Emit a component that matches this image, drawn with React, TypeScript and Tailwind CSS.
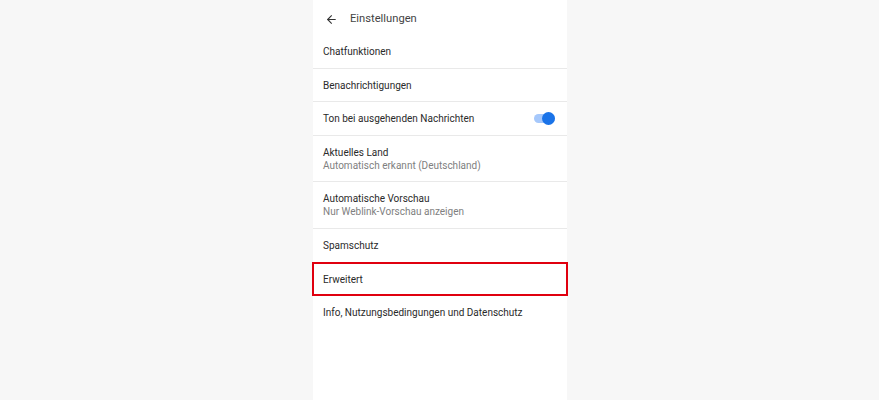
import { ArrowLeft } from "lucide-react";

type Item = {
  id: number;
  title: string;
  subtitle?: string;
  toggle?: boolean;
  marked?: boolean;
  divider?: boolean;
};

const items: Item[] = [
  { id: 1, title: "Chatfunktionen", divider: true },
  { id: 2, title: "Benachrichtigungen", divider: true },
  { id: 3, title: "Ton bei ausgehenden Nachrichten", toggle: true, divider: true },
  { id: 4, title: "Aktuelles Land", subtitle: "Automatisch erkannt (Deutschland)", divider: true },
  { id: 5, title: "Automatische Vorschau", subtitle: "Nur Weblink-Vorschau anzeigen", divider: true },
  { id: 6, title: "Spamschutz" },
  { id: 7, title: "Erweitert", marked: true },
  { id: 8, title: "Info, Nutzungsbedingungen und Datenschutz" },
];

const App = () => {
  return (
    <div className="w-full h-[400px] bg-[#f7f7f7] flex justify-center font-['Roboto',sans-serif] overflow-hidden">
      <section className="w-[254px] h-full bg-white ml-[1px]">
        <header className="h-[35px] flex items-center pl-[12px] pt-[3px]">
          <ArrowLeft className="w-[13px] h-[13px] text-[#333]" strokeWidth={2} />
          <h1 className="ml-[12px] text-[11.2px] text-[#444]">Einstellungen</h1>
        </header>
        <ul>
          {items.map((item) => {
            const { id, title, subtitle, toggle, marked, divider } = item;
            return (
              <li
                key={id}
                className={`relative flex items-center pl-[10px] pr-[12px] pt-px ${
                  subtitle ? "h-[46.5px]" : "h-[33.5px]"
                } ${divider ? "border-b border-[#e9e9e9]" : ""}`}
              >
                <div className="flex-1 flex flex-col justify-center">
                  <p className="text-[10px] leading-[13px] text-[#2a2a2a]">{title}</p>
                  {subtitle && (
                    <p className="text-[10px] leading-[13px] text-[#808080]">{subtitle}</p>
                  )}
                </div>
                {toggle && (
                  <div className="relative w-[21px] h-[13px] flex items-center">
                    <div className="w-full h-[9px] rounded-full bg-[#a6c8fb]"></div>
                    <div className="absolute right-0 w-[13px] h-[13px] rounded-full bg-[#1a73e8]"></div>
                  </div>
                )}
                {marked && (
                  <div className="absolute -left-[1px] -right-[1px] top-0 bottom-0 border-2 border-[#e0000f]"></div>
                )}
              </li>
            );
          })}
        </ul>
      </section>
    </div>
  );
};

export default App;
